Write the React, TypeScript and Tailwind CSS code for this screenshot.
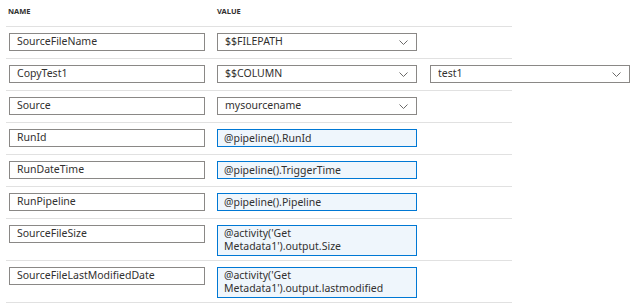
import React from 'react';

type Row = {
  name: string;
  kind: 'select' | 'expr';
  value: string[];
  extra?: string;
};

const rows: Row[] = [
  { name: 'SourceFileName', kind: 'select', value: ['$$FILEPATH'] },
  { name: 'CopyTest1', kind: 'select', value: ['$$COLUMN'], extra: 'test1' },
  { name: 'Source', kind: 'select', value: ['mysourcename'] },
  { name: 'RunId', kind: 'expr', value: ['@pipeline().RunId'] },
  { name: 'RunDateTime', kind: 'expr', value: ['@pipeline().TriggerTime'] },
  { name: 'RunPipeline', kind: 'expr', value: ['@pipeline().Pipeline'] },
  { name: 'SourceFileSize', kind: 'expr', value: ["@activity('Get", "Metadata1').output.Size"] },
  {
    name: 'SourceFileLastModifiedDate',
    kind: 'expr',
    value: ["@activity('Get", "Metadata1').output.lastmodified"],
  },
];

const Chevron = () => (
  <svg width="9" height="5" viewBox="0 0 9 5" className="flex-shrink-0">
    <path d="M0.5 0.5 L4.5 4.5 L8.5 0.5" fill="none" stroke="#6b6a69" strokeWidth="1" />
  </svg>
);

const SelectBox = ({ value, className }: { value: string; className: string }) => (
  <div
    className={`flex items-center justify-between h-[18px] border border-[#8a8886] bg-white pl-[7px] pr-[8px] ${className}`}
  >
    <span className="truncate">{value}</span>
    <Chevron />
  </div>
);

export default function App() {
  return (
    <div
      className="bg-white w-[637px] h-[306px] overflow-hidden text-[10.5px] text-[#323130]"
      style={{ fontFamily: '"Noto Sans", "Open Sans", Arial, sans-serif' }}
    >
      <div className="w-[506px] ml-[6px]">
        <div className="flex items-center h-[26px] pb-[2px] text-[7.5px] font-bold text-[#323130]">
          <span className="w-[211px] pl-[2px]">NAME</span>
          <span>VALUE</span>
        </div>
        <div className="h-px bg-[#e1e1e1]" />
        {rows.map((row) => {
          const tall = row.value.length > 1;
          return (
            <div key={row.name}>
              <div
                className={`flex items-start pl-[3px] whitespace-nowrap ${
                  tall ? 'pt-[6px] pb-[4px]' : 'pt-[6px] pb-[7px]'
                }`}
              >
                <div className="w-[196px] h-[18px] flex items-center border border-[#8a8886] pl-[7px] flex-shrink-0">
                  {row.name}
                </div>
                {row.kind === 'select' ? (
                  <SelectBox value={row.value[0]} className="w-[200px] ml-[12px] flex-shrink-0" />
                ) : (
                  <div
                    className={`w-[200px] ml-[12px] flex-shrink-0 border border-[#0078d4] bg-[#eff6fc] px-[6px] leading-[13px] ${
                      tall ? 'h-[31px] pt-[1px]' : 'h-[18px] flex items-center'
                    }`}
                  >
                    {row.value.map((line) => (
                      <div key={line}>{line}</div>
                    ))}
                  </div>
                )}
                {row.extra && (
                  <SelectBox value={row.extra} className="w-[200px] ml-[13px] flex-shrink-0" />
                )}
              </div>
              <div className="h-px bg-[#e1e1e1]" />
            </div>
          );
        })}
      </div>
    </div>
  );
}
